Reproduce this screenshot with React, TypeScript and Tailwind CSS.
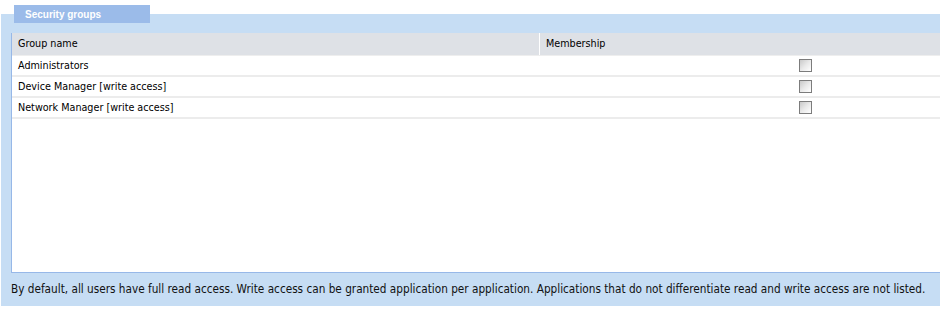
import React from "react";

const rows = [
  "Administrators",
  "Device Manager [write access]",
  "Network Manager [write access]",
];

function Box() {
  return (
    <div className="h-[13px] w-[13px] border border-[#7c7c7c] bg-gradient-to-br from-[#c9c9c9] via-[#e9e9e9] to-[#ffffff]" />
  );
}

export default function App() {
  return (
    <div
      className="h-[309px] w-[940px] overflow-hidden bg-white text-[10.7px] text-black"
      style={{ fontFamily: '"DejaVu Sans Condensed", "Liberation Sans", Arial, sans-serif' }}
    >
      <div className="h-[5px]" />
      <div
        className="relative z-10 ml-[14px] flex h-[18px] w-[136px] items-center bg-[#9bbbe9] pl-[11px] text-[10px] font-bold text-white"
        style={{ fontFamily: '"Liberation Sans", Arial, sans-serif' }}
      >
        Security groups
      </div>
      <div className="-mt-[9px] ml-[1px] h-[292px] bg-[#c6ddf4] pt-[19px]">
        <div className="ml-[10px] flex h-[240px] flex-col border-b border-l border-[#97b8e8] bg-white">
          <div className="flex h-[22px] shrink-0 items-center bg-[#dee1e6]">
            <div className="flex h-full w-[528px] items-center border-r border-white pl-[6px] pt-[1px]">
              Group name
            </div>
            <div className="pl-[6px] pt-[1px]">Membership</div>
          </div>
          <div className="h-[1px] bg-[#eeeeee]" />
          {rows.map((r) => (
            <div
              key={r}
              className="flex h-[21px] shrink-0 items-center border-b-2 border-[#ececec]"
            >
              <div className="w-[787px] pl-[6px] pt-[2px]">{r}</div>
              <Box />
            </div>
          ))}
        </div>
        <div className="ml-[10px] flex h-[32px] items-center pt-[2px] text-[11.7px] text-[#111]">
          By default, all users have full read access. Write access can be granted application per application. Applications that do not differentiate read and write access are not listed.
        </div>
      </div>
    </div>
  );
}
